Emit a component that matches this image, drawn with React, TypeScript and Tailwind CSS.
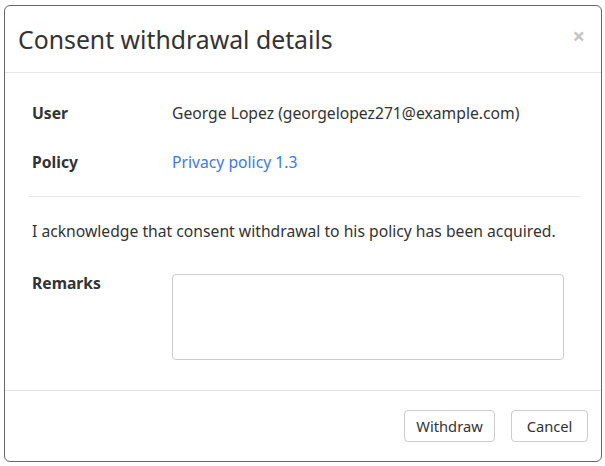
export default function App() {
  return (
    <div className="w-[605px] h-[466px] bg-white pt-[5px] pl-[4px]" style={{ fontFamily: '"Noto Sans", "Open Sans", sans-serif' }}>
      <div className="w-[598px] h-[457px] border border-[#666] rounded-[6px] flex flex-col text-[#333]">
        <div className="h-[67px] border-b border-[#e5e5e5] flex items-center justify-between pl-[13px] pr-[16px]">
          <h1 className="text-[24.8px] leading-[30px] font-normal">Consent withdrawal details</h1>
          <span className="text-[#c4c4c4] text-[22px] font-bold leading-none -mt-[8px]">×</span>
        </div>
        <div className="h-[318px] border-b border-[#e5e5e5] pl-[27px] pr-[20px] pt-[28px] text-[15.7px] leading-[24px]">
          <div className="flex">
            <div className="w-[140px] font-bold">User</div>
            <div>George Lopez (georgelopez271@example.com)</div>
          </div>
          <div className="flex mt-[25px]">
            <div className="w-[140px] font-bold">Policy</div>
            <div className="text-[#3d7be0]">Privacy policy 1.3</div>
          </div>
          <div className="h-px bg-[#e8e8e8] mt-[22px] -ml-[4px]" />
          <div className="mt-[22px]">I acknowledge that consent withdrawal to his policy has been acquired.</div>
          <div className="flex mt-[28px]">
            <div className="w-[140px] font-bold">Remarks</div>
            <textarea className="mt-[3px] w-[392px] h-[86px] border border-[#ccc] rounded-[4px] resize-none outline-none" />
          </div>
        </div>
        <div className="flex-1 flex items-center justify-end gap-[16px] pr-[13px]">
          <button className="w-[91px] h-[32px] border border-[#ccc] rounded-[4px] text-[14.7px] text-[#333] bg-white">Withdraw</button>
          <button className="w-[77px] h-[32px] border border-[#ccc] rounded-[4px] text-[14.7px] text-[#333] bg-white">Cancel</button>
        </div>
      </div>
    </div>
  );
}
